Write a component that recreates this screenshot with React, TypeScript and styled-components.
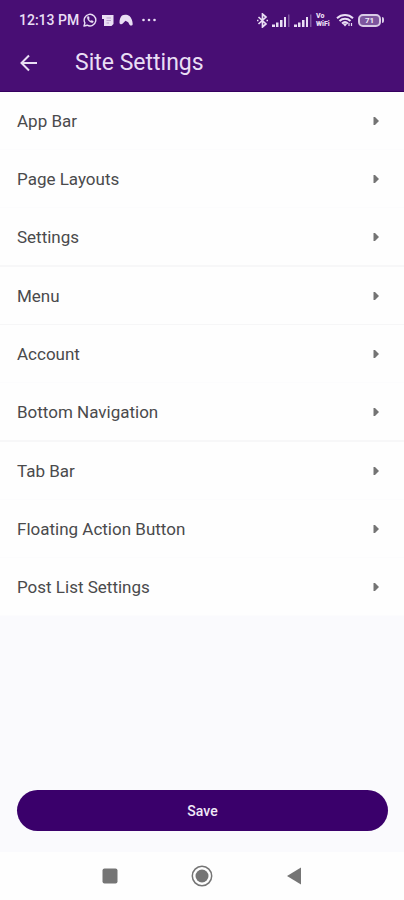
import React from "react";
import styled, { createGlobalStyle } from "styled-components";

const GlobalStyle = createGlobalStyle`
  *, *::before, *::after { box-sizing: border-box; }
  body {
    margin: 0;
    background: #fafafd;
    font-family: Roboto, "Liberation Sans", sans-serif;
  }
  button { font: inherit; border: 0; padding: 0; background: none; cursor: pointer; }
`;

const Screen = styled.div`
  display: flex;
  flex-direction: column;
  min-height: 100vh;
`;

const Header = styled.header`
  background: #480e74;
  color: #e9def4;
  border-bottom: 1px solid #35005f;
`;

const StatusBar = styled.div`
  display: flex;
  align-items: center;
  justify-content: space-between;
  height: 40px;
  padding: 0 20px 0 19px;
`;

const StatusGroup = styled.div<{ $gap: number }>`
  display: flex;
  align-items: center;
  gap: ${({ $gap }) => $gap}px;

  svg { display: block; flex: none; }
`;

const Clock = styled.time`
  font-size: 14px;
  font-weight: 500;
  line-height: 20px;
`;

const CarrierLabel = styled.span`
  display: flex;
  flex-direction: column;
  width: 16px;
  font-size: 7px;
  font-weight: 900;
  line-height: 8px;
`;

const Battery = styled.span`
  display: flex;
  align-items: center;
  gap: 1px;

  &::after {
    content: "";
    width: 2px;
    height: 6px;
    border-radius: 0 2px 2px 0;
    background: #d9cbe6;
  }
`;

const BatteryLevel = styled.span`
  display: flex;
  align-items: center;
  justify-content: center;
  width: 23px;
  height: 13px;
  border: 2px solid #d9cbe6;
  border-radius: 5px;
  background: #7d559e;
  color: #f3edf8;
  font-size: 8px;
  font-weight: 700;
  line-height: 9px;
`;

const AppBar = styled.div`
  display: flex;
  align-items: center;
  gap: 34px;
  height: 51px;
  padding: 0 17px 5px;
`;

const BackButton = styled.button`
  display: flex;
  color: inherit;
`;

const Title = styled.h1`
  margin: 0;
  font-size: 23px;
  font-weight: 400;
  line-height: 28px;
`;

const SettingsList = styled.ul`
  margin: 0;
  padding: 0;
  list-style: none;
  background: #fefefe;
`;

type Divider = "faint" | "thin" | "thick";

const dividers: Record<Divider, string> = {
  faint: "1px solid #fcfcfd",
  thin: "1px solid #f6f6f7",
  thick: "2px solid #f7f7f8",
};

const SettingsItem = styled.li<{ $divider: Divider }>`
  border-bottom: ${({ $divider }) => dividers[$divider]};
`;

const SettingsRow = styled.button`
  display: flex;
  align-items: center;
  justify-content: space-between;
  width: 100%;
  height: 57px;
  padding: 1px 25px 0 17px;
  color: #4a4a4c;
  font-size: 17px;
  line-height: 24px;
  text-align: left;
`;

const Footer = styled.div`
  margin-top: auto;
  padding: 24px 16px 21px 17px;
`;

const SaveButton = styled.button`
  display: block;
  width: 100%;
  height: 41px;
  border-radius: 21px;
  background: #3a006b;
  color: #f0e8f7;
  font-size: 14px;
  font-weight: 500;
  line-height: 20px;
`;

const SystemNav = styled.nav`
  display: flex;
  align-items: center;
  justify-content: center;
  gap: 68px;
  height: 48px;
  background: #fefefe;
`;

const NavButton = styled.button`
  display: flex;
  color: #757575;
`;

const items: { label: string; divider?: Divider }[] = [
  { label: "App Bar" },
  { label: "Page Layouts" },
  { label: "Settings", divider: "thick" },
  { label: "Menu", divider: "thin" },
  { label: "Account" },
  { label: "Bottom Navigation", divider: "thick" },
  { label: "Tab Bar" },
  { label: "Floating Action Button" },
  { label: "Post List Settings" },
];

const Whatsapp = () => (
  <svg width="14" height="14" viewBox="0 0 14 14" fill="none" stroke="currentColor">
    <path d="M1 13l.9-3.1A5.8 5.8 0 1 1 4.2 12.200z" strokeWidth="1.4" strokeLinejoin="round" />
    <path d="M4.300 3.700c-.6 2.700 2.900 6.400 5.600 5.900l.5-1.300-1.700-.9-.9.700C6.700 7.600 6 6.800 5.700 6l.7-.8-.7-1.700z" fill="currentColor" strokeWidth=".4" />
  </svg>
);

const Note = () => (
  <svg width="14" height="12" viewBox="0 0 14 12">
    <path d="M1 1h11.500v9L10.500 12H3V5H1z" fill="currentColor" />
    <path d="M5.500 4h4.500M5.500 6.500h4.500M5.500 9h2.500" stroke="#b7a0cb" />
  </svg>
);

const Gamepad = () => (
  <svg width="14" height="12" viewBox="0 0 14 12" fill="currentColor">
    <path d="M3 1.500C5 .3 8.500.5 10.500 2c1.800 1.400 3.200 5 3.200 8 0 2-2.400 2-3.200.7L9.200 8.300 6.500 6.800 4 9.300c-1 1.300-3.400 1.200-3.500-.6C.4 6 1.500 2.700 3 1.500z" />
  </svg>
);

const Dots = () => (
  <svg width="14" height="4" viewBox="0 0 14 4" fill="currentColor">
    <circle cx="1.500" cy="2" r="1.300" />
    <circle cx="7" cy="2" r="1.300" />
    <circle cx="12.500" cy="2" r="1.300" />
  </svg>
);

const Bluetooth = () => (
  <svg width="11" height="15" viewBox="0 0 11 15" fill="none" stroke="currentColor" strokeWidth="1.700">
    <path d="M1.500 4l7.500 7-3.500 3V1L9 4l-7.500 7" />
    <path d="M0 7.500h1.500M9.500 7.500H11" />
  </svg>
);

const Signal = () => (
  <svg width="18" height="13" viewBox="0 0 18 13" fill="currentColor">
    <path d="M0 10.500h3V13H0zM4 8.500h2.500V13H4zM8 6h2.500v7H8zM12 3h2v10h-2z" />
    <path d="M16 .5h1.500V13H16z" opacity=".35" />
  </svg>
);

const Wifi = () => (
  <svg width="18" height="14" viewBox="0 0 18 14" fill="none" stroke="currentColor" strokeWidth="2">
    <path d="M1 5.200c4.600-4.200 11.400-4.200 16 0M3.500 7.900c3.200-2.900 7.800-2.900 11 0M6 10.500c1.800-1.600 4.200-1.600 6 0" />
    <path d="M6.500 10.500l2.500 3 2.500-3z" fill="currentColor" stroke="none" />
    <path d="M13 10v3M15.500 10v3" strokeWidth="1.200" />
  </svg>
);

const BackArrow = () => (
  <svg width="24" height="24" viewBox="0 0 24 24" fill="none" stroke="currentColor" strokeWidth="2">
    <path d="M20 12H5M12 4.500L4.500 12l7.500 7.500" />
  </svg>
);

const RowArrow = () => (
  <svg width="6" height="8" viewBox="0 0 6 8" fill="#747474" aria-hidden="true">
    <path d="M.5 0H2l4 4-4 4H.5z" />
  </svg>
);

export default function App() {
  return (
    <>
      <GlobalStyle />
      <Screen>
        <Header>
          <StatusBar>
            <StatusGroup $gap={9}>
              <StatusGroup $gap={4}>
                <Clock>12:13 PM</Clock>
                <Whatsapp />
                <Note />
                <Gamepad />
              </StatusGroup>
              <Dots />
            </StatusGroup>
            <StatusGroup $gap={4}>
              <Bluetooth />
              <Signal />
              <Signal />
              <CarrierLabel>
                <span>Vo</span>
                <span>WiFi</span>
              </CarrierLabel>
              <Wifi />
              <Battery>
                <BatteryLevel>71</BatteryLevel>
              </Battery>
            </StatusGroup>
          </StatusBar>
          <AppBar>
            <BackButton type="button" aria-label="Back">
              <BackArrow />
            </BackButton>
            <Title>Site Settings</Title>
          </AppBar>
        </Header>
        <main>
          <SettingsList>
            {items.map(({ label, divider = "faint" }) => (
              <SettingsItem key={label} $divider={divider}>
                <SettingsRow type="button">
                  {label}
                  <RowArrow />
                </SettingsRow>
              </SettingsItem>
            ))}
          </SettingsList>
        </main>
        <Footer>
          <SaveButton type="button">Save</SaveButton>
        </Footer>
        <SystemNav aria-label="System">
          <NavButton type="button" aria-label="Recent apps">
            <svg width="24" height="24" viewBox="0 0 24 24">
              <rect x="4.500" y="4.500" width="15" height="15" rx="2" fill="currentColor" />
            </svg>
          </NavButton>
          <NavButton type="button" aria-label="Home">
            <svg width="24" height="24" viewBox="0 0 24 24">
              <circle cx="12" cy="12" r="9.700" fill="none" stroke="currentColor" strokeWidth="1.500" />
              <circle cx="12" cy="12" r="6.500" fill="currentColor" />
            </svg>
          </NavButton>
          <NavButton type="button" aria-label="Back navigation">
            <svg width="24" height="24" viewBox="0 0 24 24">
              <path d="M19 3.500v17L5 12z" fill="currentColor" />
            </svg>
          </NavButton>
        </SystemNav>
      </Screen>
    </>
  );
}
